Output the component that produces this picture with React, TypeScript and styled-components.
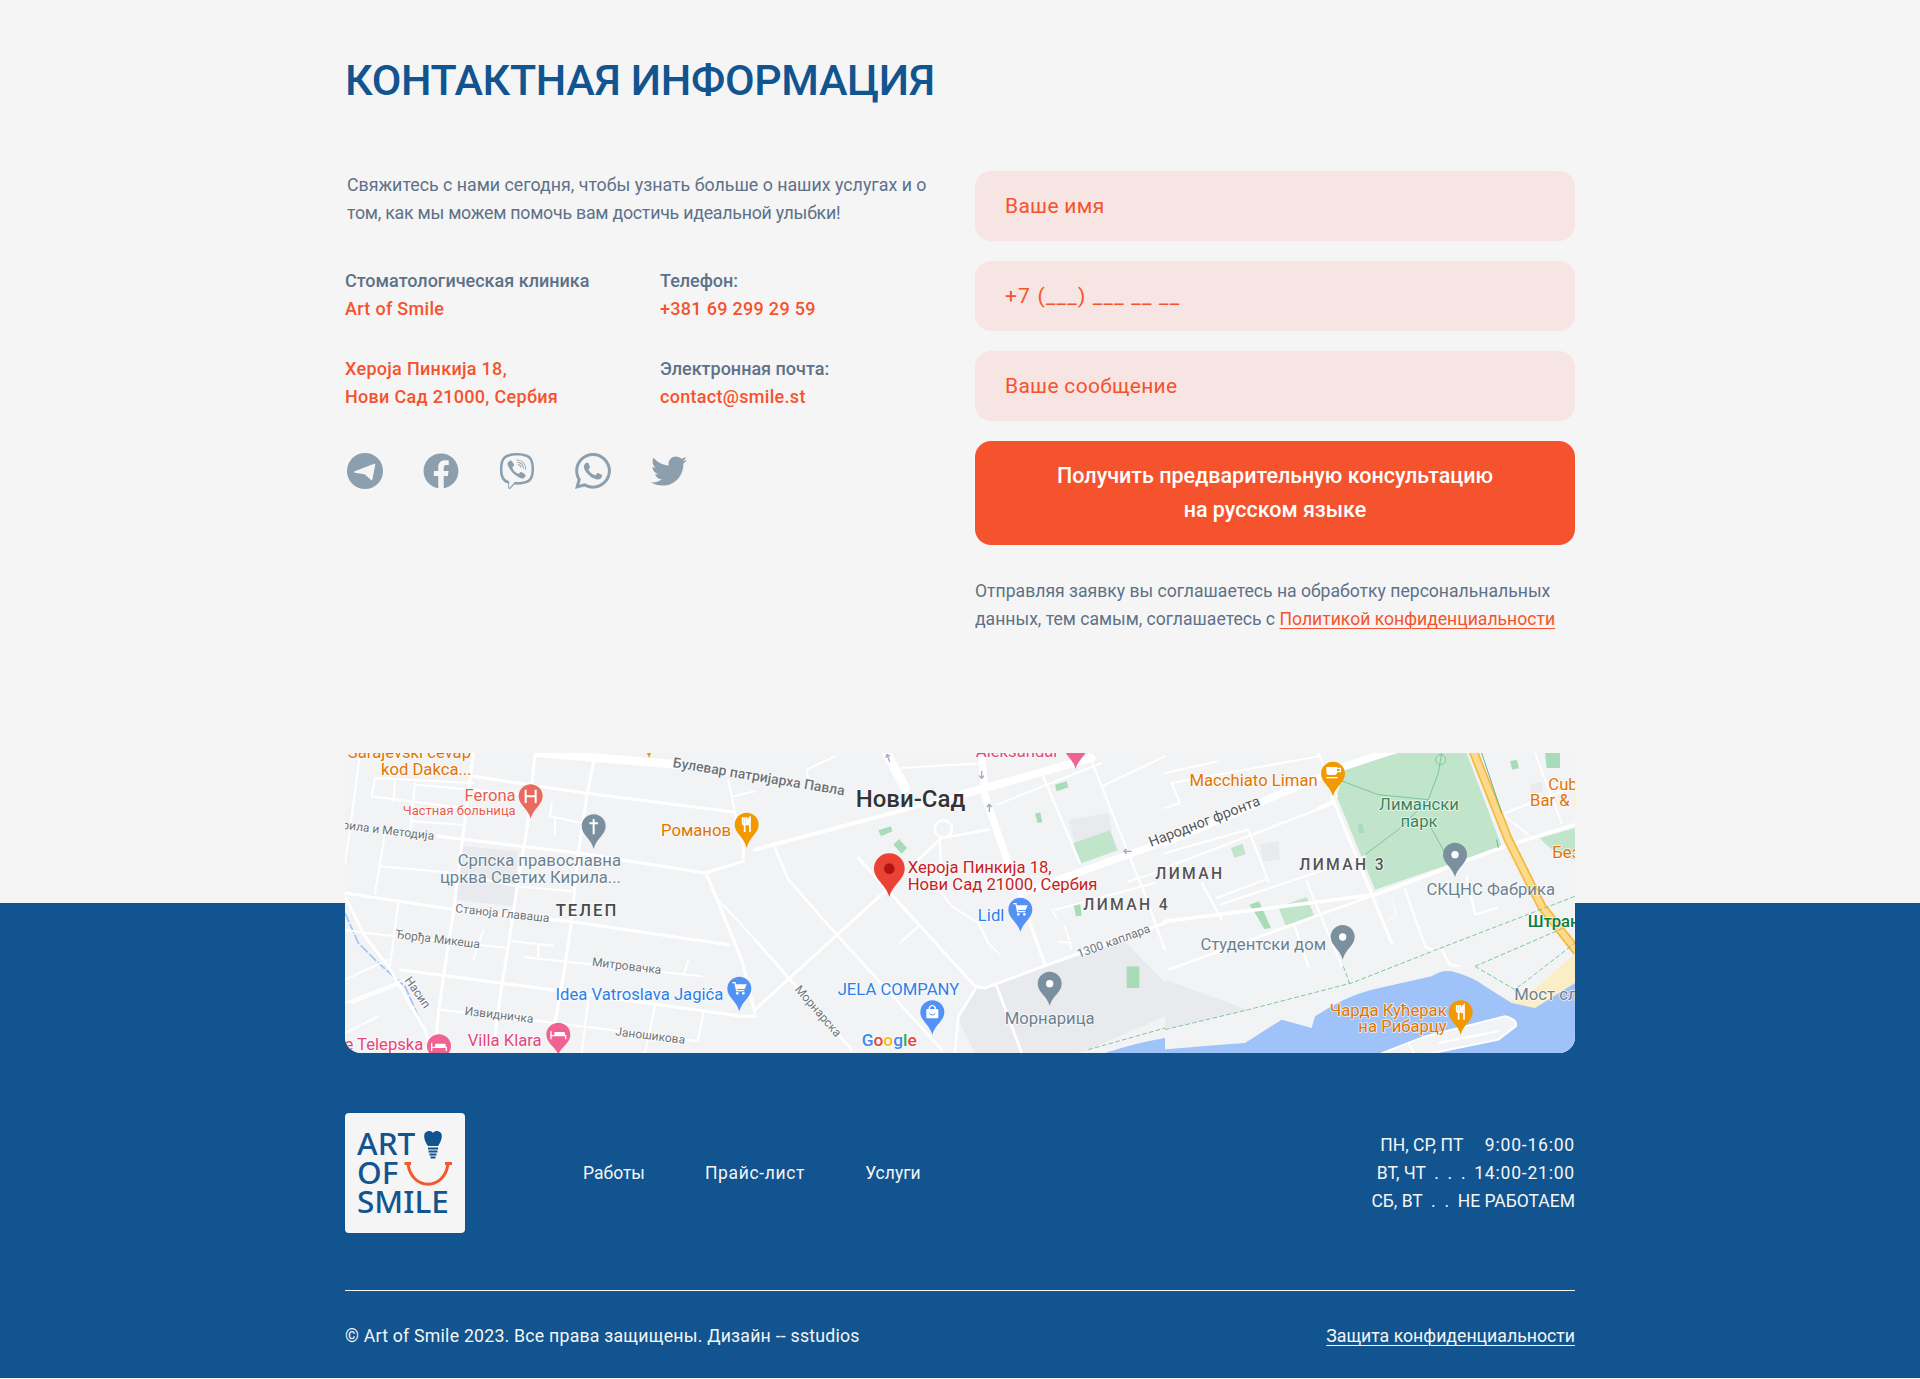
import React from "react"
import styled, { createGlobalStyle } from "styled-components"
import { FaFacebook, FaTwitter, FaViber, FaWhatsapp } from "react-icons/fa"

const BLUE = "#11548f"
const ORANGE = "#f5532d"
const FONT = `Roboto, "Noto Sans", sans-serif`

const GlobalStyle = createGlobalStyle`
  * { box-sizing: border-box; }
  html, body { margin: 0; padding: 0; background: #f5f5f5; }
  body { font-family: ${FONT}; font-variant-ligatures: none; }
`

const Page = styled.div`
  width: 100%;
  min-height: 1379px;
  background: #f5f5f5;
`

const Container = styled.div`
  width: 1230px;
  margin: 0 auto;
`

const Title = styled.h1`
  margin: 0;
  padding-top: 55px;
  font-size: 43px;
  line-height: 50px;
  font-weight: 500;
  color: ${BLUE};
  letter-spacing: -0.35px;
`

const Columns = styled.div`
  display: grid;
  grid-template-columns: 630px 600px;
  margin-top: 66px;
  padding-bottom: 120px;
`

const Lead = styled.p`
  margin: 0 0 40px 2px;
  width: 600px;
  font-size: 17.8px;
  line-height: 28px;
  color: #5d7188;
`

const LeadTail = styled.span`
  letter-spacing: -0.25px;
`

const ContactGrid = styled.div`
  display: grid;
  grid-template-columns: 315px 315px;
  row-gap: 32px;
`

const ContactBlock = styled.div`
  font-size: 18px;
  line-height: 28px;
  font-weight: 500;
  color: #5d7188;
`

const Accent = styled.div`
  color: ${ORANGE};
  letter-spacing: 0.3px;
`

const Socials = styled.div`
  display: flex;
  gap: 40px;
  margin: 42px 0 0 2px;
  color: #8c9fae;
  svg { display: block; width: 36px; height: 36px; }
`

const WhatsappIcon = styled(FaWhatsapp)`
  transform: scale(1.14);
`

const Form = styled.form`
  display: flex;
  flex-direction: column;
  gap: 20px;
`

const Field = styled.input<{ $tracking?: number }>`
  width: 100%;
  height: 70px;
  padding: 0 30px;
  border: 0;
  border-radius: 16px;
  background: #f7e5e3;
  font-family: ${FONT};
  font-size: 21px;
  letter-spacing: ${({ $tracking }) => $tracking ?? 0.3}px;
  color: ${ORANGE};
  outline: none;
  &::placeholder { color: ${ORANGE}; opacity: 1; }
`

const Submit = styled.button`
  height: 104px;
  border: 0;
  border-radius: 16px;
  background: ${ORANGE};
  color: #fff;
  font-family: ${FONT};
  font-size: 21.5px;
  line-height: 34px;
  font-weight: 500;
`

const Note = styled.p`
  margin: 12px 0 0;
  font-size: 17.6px;
  line-height: 28px;
  color: #5d7188;
`

const NoteLink = styled.a`
  color: ${ORANGE};
  text-decoration: underline;
  text-underline-offset: 3px;
  text-decoration-thickness: 1px;
`

const MapBand = styled.div`
  background: linear-gradient(#f5f5f5 150px, ${BLUE} 150px);
`

const MapFrame = styled.div`
  width: 1230px;
  height: 300px;
  margin: 0 auto;
  border-radius: 0 0 16px 16px;
  overflow: hidden;
  background: #f2f3f5;
  svg { display: block; }
`

const Footer = styled.footer`
  background: ${BLUE};
  color: #f5f5f5;
  padding: 60px 0 28px;
`

const FooterTop = styled.div`
  display: flex;
  align-items: center;
  padding-bottom: 57px;
  border-bottom: 1px solid #f5f5f5;
`

const Logo = styled.div`
  width: 120px;
  height: 120px;
  border-radius: 4px;
  background: #f5f5f5;
  svg { display: block; }
`

const Nav = styled.nav`
  display: flex;
  gap: 60px;
  margin-left: 118px;
  font-size: 17.5px;
`

const NavItem = styled.span<{ $tracking?: number }>`
  letter-spacing: ${({ $tracking }) => $tracking ?? 0}px;
`

const Hours = styled.div`
  margin-left: auto;
  font-size: 17.5px;
  line-height: 28px;
  text-align: right;
  white-space: pre;
`

const Time = styled.span`
  letter-spacing: 0.8px;
`

const FooterBottom = styled.div`
  display: flex;
  justify-content: space-between;
  margin-top: 31px;
  font-size: 17.7px;
  line-height: 28px;
`

const Copyright = styled.span`
  letter-spacing: 0.23px;
`

const FooterLink = styled.a`
  text-decoration: underline;
  text-underline-offset: 3px;
  text-decoration-thickness: 1px;
`

const TelegramIcon = () => (
  <svg viewBox="0 0 36 36">
    <circle cx="18" cy="18" r="18" fill="currentColor" />
    <path d="M8 19 L27.5 11.5 L24.5 26.5 L18 20.5 Z" fill="#f5f5f5" stroke="#f5f5f5" strokeWidth="1.6" strokeLinejoin="round" />
  </svg>
)

// map is drawn per 3x crop, coordinates taken straight from the zooms
type Road = [string, number?]

const ROADS_LEFT: Road[] = [
  ["M385,70 L720,120 L1170,178"],
  ["M570,0 L550,200 L515,410 L490,580 L470,700 L450,850"],
  ["M745,30 L725,130 L700,300 L680,500 L660,640 L630,810"],
  ["M385,0 L350,280 L325,480 L300,640 L280,780 L270,900"],
  ["M210,90 L195,240", 6],
  ["M120,240 L90,420", 6],
  ["M45,0 L15,230 L0,330", 6],
  ["M200,205 L350,215", 6],
  ["M90,75 L385,90 M90,75 L80,130 L350,165 M150,85 L145,145 M215,95 L540,125", 6],
  ["M280,250 L700,300 L1080,360 L1195,325 L1195,280 L1170,180"],
  ["M105,340 L325,360 L515,400 L680,415", 6],
  ["M0,420 L330,470 L670,505 L1150,575"],
  ["M0,530 L60,540 L400,575 L490,585", 6],
  ["M500,565 L625,578 M580,575 L580,610 M540,613 L1070,670", 6],
  ["M415,530 L385,620 M1030,620 L1015,670", 6],
  ["M165,650 L620,710 L1190,790 L1230,790"],
  ["M160,450 L135,640", 6],
  ["M285,770 L630,810 L910,845 L1060,865", 6],
  ["M1085,365 L1190,620 L1230,780"],
  ["M1120,440 L1230,560", 6],
  ["M0,430 L60,550 L130,640 L240,830 L260,890"],
  ["M0,680 L130,620 M0,750 L180,680 M20,750 L160,695 M0,840 L100,790", 6],
  ["M930,760 L900,900 M1075,780 L1060,860 M730,740 L710,900", 6],
  ["M620,150 L615,190 L710,210 M630,190 L630,245", 6],
  ["M1150,80 L1170,180 M1165,130 L1230,115", 6],
  ["M580,0 L1000,35", 26],
  ["M1000,35 L1230,70", 8],
]

const ROADS_MID: Road[] = [
  ["M1010,15 L620,125", 24],
  ["M620,125 L430,175 L0,290", 12],
  ["M395,0 L450,105", 28],
  ["M680,0 L690,130 L770,360", 22],
  ["M770,360 L870,635", 9],
  ["M1230,265 L800,420", 22],
  ["M310,315 L660,700 L690,705 L1000,590 L1230,510", 9],
  ["M60,285 L100,380 L245,545 L560,890", 8],
  ["M390,415 L0,770"],
  ["M490,520 L435,570", 6],
  ["M555,260 L560,420 L590,460 L670,510 L700,570 L735,605", 6],
  ["M490,320 L560,255 L700,230", 8],
  ["M0,560 L290,890", 8],
  ["M725,700 L800,900 M660,710 L610,790 L600,900", 8],
  ["M725,155 L1040,30", 6],
  ["M160,80 L155,50 L240,10", 6],
  ["M860,60 L975,330", 7],
  ["M1000,0 L1160,400 L1230,590", 7],
  ["M1040,100 L1230,10", 6],
  ["M440,45 L690,30", 6],
  ["M900,470 L1200,390", 6],
  ["M930,520 L950,590 M910,565 L950,570", 5],
  ["M890,470 L905,495 M1230,350 L1120,385", 5],
]

const ROADS_RIGHT: Road[] = [
  ["M0,270 L540,40 L690,-10", 22],
  ["M500,130 L680,570", 9],
  ["M0,505 L630,425 L1020,280 L1230,215", 11],
  ["M1020,190 L1090,245 M1020,180 L1110,145 L1230,100", 6],
  ["M460,0 L515,130", 7],
  ["M0,300 L250,230 L310,385", 7],
  ["M0,345 L510,150 M460,165 L500,145", 7],
  ["M155,435 L300,380 M165,455 L600,310", 6],
  ["M110,390 L170,500", 7],
  ["M425,385 L530,640", 6],
  ["M390,520 L430,640", 7],
  ["M10,650 L630,425", 8],
  ["M720,410 L770,550 L780,580 L810,595", 7],
  ["M830,590 L855,635 L880,640", 7],
  ["M905,370 L930,485 L995,465", 7],
  ["M680,430 L695,490 L665,505", 3],
  ["M0,60 L160,25 M20,90 L45,150 L0,165 M20,90 L460,10", 6],
  ["M1110,0 L1190,210", 6],
]

type Pin = { x: number; y: number; color: string; r?: number; tip?: number; glyph?: "dot" | "H" | "cross" | "fork" | "cart" | "bed" | "cup" | "bag" | "main" }

const pinPath = (x: number, y: number, r: number, tip: number) =>
  `M${x},${tip} C${x - r * 0.2},${y + r * 1.05} ${x - r},${y + r * 0.7} ${x - r},${y} a${r},${r} 0 0 1 ${r * 2},0 C${x + r},${y + r * 0.7} ${x + r * 0.2},${y + r * 1.05} ${x},${tip} Z`

const PinGlyph: React.FC<{ x: number; y: number; glyph?: Pin["glyph"] }> = ({ x, y, glyph }) => {
  const white = { stroke: "#fff", fill: "none", strokeWidth: 5 }
  switch (glyph) {
    case "dot":
      return <circle cx={x} cy={y} r={11} fill="#fff" />
    case "main":
      return <circle cx={x} cy={y} r={16} fill="#b31412" />
    case "H":
      return <path d={`M${x - 15},${y - 20} V${y + 20} M${x + 15},${y - 20} V${y + 20} M${x - 15},${y} H${x + 15}`} {...white} strokeWidth={6} />
    case "cross":
      return <path d={`M${x},${y - 22} V${y + 24} M${x - 13},${y - 9} H${x + 13}`} {...white} strokeWidth={6} />
    case "fork":
      return <path d={`M${x - 12},${y - 22} V${y - 6} Q${x - 12},${y} ${x - 6},${y} V${y + 22} M${x},${y - 22} V${y - 6} Q${x},${y} ${x - 6},${y} M${x - 6},${y - 22} V${y} M${x + 10},${y + 22} V${y - 22} Q${x + 4},${y - 16} ${x + 4},${y} H${x + 10}`} {...white} strokeWidth={5} />
    case "cart":
      return (
        <g>
          <path d={`M${x - 21},${y - 18} H${x - 13} L${x - 8},${y + 6} H${x + 15}`} {...white} strokeWidth={4} />
          <path d={`M${x - 12},${y - 13} H${x + 22} L${x + 16},${y + 1} H${x - 9} Z`} fill="#fff" />
          <circle cx={x - 6} cy={y + 14} r={4} fill="#fff" />
          <circle cx={x + 12} cy={y + 14} r={4} fill="#fff" />
        </g>
      )
    case "bed":
      return (
        <g>
          <path d={`M${x - 22},${y - 10} V${y + 14} M${x + 22},${y + 14} V${y + 3} H${x - 22}`} {...white} strokeWidth={4} />
          <rect x={x - 12} y={y - 8} width={32} height={10} rx={3} fill="#fff" />
        </g>
      )
    case "cup":
      return (
        <g>
          <path d={`M${x - 20},${y - 20} H${x + 12} V${y - 4} Q${x + 12},${y + 4} ${x + 4},${y + 4} H${x - 12} Q${x - 20},${y + 4} ${x - 20},${y - 4} Z`} fill="#fff" />
          <path d={`M${x + 12},${y - 16} H${x + 22} V${y - 6} H${x + 12}`} {...white} strokeWidth={4} />
          <path d={`M${x - 20},${y + 12} H${x + 14}`} {...white} strokeWidth={4} />
        </g>
      )
    case "bag":
      return (
        <g>
          <rect x={x - 18} y={y - 10} width={36} height={28} rx={3} fill="#fff" />
          <path d={`M${x - 9},${y - 10} V${y - 14} Q${x},${y - 28} ${x + 9},${y - 14} V${y - 10}`} {...white} strokeWidth={4} />
          <path d={`M${x - 9},${y + 3} Q${x},${y + 13} ${x + 9},${y + 3}`} stroke="#5491f5" fill="none" strokeWidth={3} />
        </g>
      )
    default:
      return null
  }
}

const MapPin: React.FC<Pin> = ({ x, y, color, r = 36, tip, glyph }) => (
  <g>
    <path d={pinPath(x, y, r, tip ?? y + r * 1.9)} fill={color} />
    <PinGlyph x={x} y={y} glyph={glyph} />
  </g>
)

const PINS_LEFT: Pin[] = [
  { x: 557, y: 130, color: "#ea6a5f", tip: 197, glyph: "H" },
  { x: 746, y: 220, color: "#7b909f", tip: 288, glyph: "cross" },
  { x: 1205, y: 215, color: "#f29900", tip: 285, glyph: "fork" },
  { x: 1183, y: 707, color: "#5491f5", tip: 775, glyph: "cart" },
  { x: 640, y: 845, color: "#f06292", tip: 905, glyph: "bed" },
  { x: 282, y: 880, color: "#f06292", tip: 950, glyph: "bed" },
  { x: 912, y: -50, color: "#f29900", tip: 15 },
]

const PINS_MID: Pin[] = [
  { x: 962, y: -20, color: "#f06292", tip: 48 },
  { x: 403, y: 347, r: 46, color: "#ea4335", tip: 432, glyph: "main" },
  { x: 796, y: 470, color: "#5491f5", tip: 537, glyph: "cart" },
  { x: 532, y: 778, color: "#5491f5", tip: 845, glyph: "bag" },
  { x: 884, y: 692, color: "#7b909f", tip: 758, glyph: "dot" },
]

const PINS_RIGHT: Pin[] = [
  { x: 504, y: 62, color: "#f29900", tip: 130, glyph: "cup" },
  { x: 870, y: 305, color: "#7b909f", tip: 372, glyph: "dot" },
  { x: 533, y: 552, color: "#7b909f", tip: 620, glyph: "dot" },
  { x: 887, y: 778, color: "#f29900", tip: 845, glyph: "fork" },
]

const MapText = styled.text<{ $size?: number; $weight?: number; $spacing?: number }>`
  font-family: Roboto, sans-serif;
  font-size: ${({ $size }) => $size ?? 50}px;
  font-weight: ${({ $weight }) => $weight ?? 400};
  letter-spacing: ${({ $spacing }) => $spacing ?? 0}px;
  paint-order: stroke;
  stroke: rgba(255, 255, 255, 0.75);
  stroke-width: 5px;
  stroke-linejoin: round;
`

type Label = { t: string; x: number; y: number; c: string; end?: boolean; mid?: boolean; rot?: number; size?: number; weight?: number; spacing?: number }

const ORG = "#e37400"
const GRAY = "#6c8190"
const STREET = "#6f7378"
const PINK = "#e8447a"
const MAPBLUE = "#2f7fe6"

const LABELS_LEFT: Label[] = [
  { t: "Sarajevski ćevap", x: 378, y: 15, c: ORG, end: true },
  { t: "kod Dakca...", x: 380, y: 65, c: ORG, end: true },
  { t: "Ferona", x: 512, y: 145, c: "#ea5b4f", end: true },
  { t: "Частная больница", x: 512, y: 185, c: "#ea5b4f", end: true, size: 39 },
  { t: "Кирила и Методија", x: -52, y: 222, c: STREET, rot: 7, size: 36 },
  { t: "Српска православна", x: 828, y: 340, c: GRAY, end: true },
  { t: "црква Светих Кирила...", x: 828, y: 390, c: GRAY, end: true },
  { t: "ТЕЛЕП", x: 632, y: 488, c: "#4a4a4a", size: 50, weight: 500, spacing: 6 },
  { t: "Станоја Главаша", x: 330, y: 478, c: STREET, rot: 6, size: 36 },
  { t: "Ђорђа Микеша", x: 150, y: 555, c: STREET, rot: 7, size: 36 },
  { t: "Митровачка", x: 740, y: 638, c: STREET, rot: 7, size: 36 },
  { t: "Насип", x: 178, y: 682, c: STREET, rot: 55, size: 36 },
  { t: "Извидничка", x: 358, y: 785, c: STREET, rot: 7, size: 36 },
  { t: "Јаношикова", x: 810, y: 847, c: STREET, rot: 7, size: 36 },
  { t: "Idea Vatroslava Jagića", x: 1135, y: 742, c: MAPBLUE, end: true },
  { t: "Villa Klara", x: 590, y: 878, c: PINK, end: true },
  { t: "e Telepska", x: 235, y: 890, c: PINK, end: true },
  { t: "Романов", x: 1158, y: 250, c: ORG, end: true },
  { t: "Булевар патријарха Павла", x: 982, y: 42, c: STREET, rot: 9.4, size: 42, weight: 500 },
]

const LABELS_MID: Label[] = [
  { t: "Нови-Сад", x: 302, y: 162, c: "#333", size: 72, weight: 500 },
  { t: "Aleksandar", x: 912, y: 12, c: PINK, end: true },
  { t: "Хероја Пинкија 18,", x: 458, y: 360, c: "#c5221f" },
  { t: "Нови Сад 21000, Сербия", x: 458, y: 410, c: "#c5221f" },
  { t: "Lidl", x: 748, y: 503, c: MAPBLUE, end: true },
  { t: "ЛИМАН 4", x: 985, y: 470, c: "#555", size: 47, weight: 500, spacing: 7 },
  { t: "JELA COMPANY", x: 248, y: 727, c: MAPBLUE },
  { t: "Морнарица", x: 884, y: 812, c: GRAY, mid: true },
  { t: "Морнарска", x: 118, y: 710, c: STREET, rot: 49, size: 36 },
  { t: "1300 каплара", x: 972, y: 615, c: STREET, rot: -20, size: 36 },
  { t: "Народног фронта", x: 1188, y: 282, c: "#555", rot: -21, size: 43 },
]

const LABELS_RIGHT: Label[] = [
  { t: "ЛИМАН", x: 178, y: 378, c: "#555", size: 47, weight: 500, spacing: 7, end: true },
  { t: "Macchiato Liman", x: 458, y: 98, c: ORG, end: true },
  { t: "Лимански", x: 762, y: 172, c: "#34855a", mid: true },
  { t: "парк", x: 762, y: 222, c: "#34855a", mid: true },
  { t: "ЛИМАН 3", x: 403, y: 350, c: "#555", size: 47, weight: 500, spacing: 7 },
  { t: "СКЦНС Фабрика", x: 1170, y: 425, c: GRAY, end: true },
  { t: "Студентски дом", x: 483, y: 590, c: GRAY, end: true },
  { t: "Чарда Кућерак", x: 845, y: 788, c: ORG, end: true },
  { t: "на Рибарцу", x: 845, y: 838, c: ORG, end: true },
  { t: "Штранд", x: 1088, y: 522, c: "#0d7d3f", weight: 500 },
  { t: "Мост слободе", x: 1048, y: 740, c: GRAY },
  { t: "Cuba", x: 1150, y: 112, c: ORG },
  { t: "Bar & Bistro", x: 1095, y: 160, c: ORG },
  { t: "Без", x: 1162, y: 315, c: ORG },
]

const Roads: React.FC<{ roads: Road[] }> = ({ roads }) => (
  <g fill="none" stroke="#fff" strokeLinecap="round" strokeLinejoin="round">
    {roads.map(([d, w], i) => (
      <path key={i} d={d} strokeWidth={w ?? 9} />
    ))}
  </g>
)

const Labels: React.FC<{ labels: Label[] }> = ({ labels }) => (
  <>
    {labels.map(l => (
      <MapText
        key={l.t}
        x={l.x}
        y={l.y}
        fill={l.c}
        $size={l.size}
        $weight={l.weight}
        $spacing={l.spacing}
        textAnchor={l.end ? "end" : l.mid ? "middle" : "start"}
        transform={l.rot ? `rotate(${l.rot} ${l.x} ${l.y})` : undefined}
      >
        {l.t}
      </MapText>
    ))}
  </>
)

const Crop: React.FC<{ n: number; children: React.ReactNode }> = ({ n, children }) => (
  <g transform={`translate(${n * 410} 0) scale(${1 / 3})`}>{children}</g>
)

const OneWay: React.FC<{ x: number; y: number; rot: number }> = ({ x, y, rot }) => (
  <path d="M-12,0 H12 M-12,0 L-3,-7 M-12,0 L-3,7" transform={`translate(${x} ${y}) rotate(${rot})`} fill="none" stroke="#a3a8c4" strokeWidth={4} />
)

const LIGHT_GREEN = "#a8dcb8"
const PARK = "#c1e5ca"

const MapDrawing = () => (
  <svg width="1230" height="300" viewBox="0 0 1230 300">
    <rect width="1230" height="300" fill="#f2f3f5" />
    <Crop n={0}>
      <path d="M355,280 L520,295 L505,460 L335,440 Z" fill="#e8eaed" />
      <path d="M0,480 L40,570 L100,630 L180,700 L220,790 L250,850" fill="none" stroke="#9fc3f5" strokeWidth={5} strokeDasharray="30 6" />
      <Roads roads={ROADS_LEFT} />
    </Crop>
    <Crop n={1}>
      <path d="M610,800 L665,710 L1110,565 L1230,690 L1230,790 L1000,890 L960,900 L660,900 Z" fill="#e8eaed" />
      <path d="M940,200 L1060,180 L1070,235 L960,270 Z" fill="#e8eaed" />
      <path d="M955,270 L1065,232 L1088,292 L975,332 Z" fill={PARK} />
      <g fill={LIGHT_GREEN}>
        <path d="M370,232 L408,220 L412,235 L378,250 Z" />
        <path d="M415,275 L432,258 L456,285 L440,302 Z" />
        <path d="M840,182 L856,178 L862,208 L848,210 Z" />
        <path d="M900,95 L935,85 L940,103 L905,115 Z" />
        <path d="M1115,640 H1153 V705 H1115 Z" />
        <path d="M955,452 L975,448 L980,488 L963,490 Z" />
      </g>
      <Roads roads={ROADS_MID} />
      <circle cx={565} cy={228} r={26} fill="none" stroke="#fff" strokeWidth={8} />
      <OneWay x={400} y={15} rot={70} />
      <OneWay x={680} y={65} rot={-90} />
      <OneWay x={703} y={165} rot={90} />
      <OneWay x={1118} y={295} rot={0} />
      <path d="M1000,890 L1230,825" fill="none" stroke="#7fc79a" strokeWidth={3} strokeDasharray="14 7" />
      <path d="M1050,900 Q1140,870 1230,855 V900 Z" fill="#9fc3f8" />
    </Crop>
    <Crop n={2}>
      <path d="M540,45 L700,0 L905,0 L1010,280 L630,410 L515,130 Z" fill={PARK} />
      <path d="M1125,255 L1230,225 V320 Q1160,300 1125,255 Z" fill={PARK} />
      <g fill={LIGHT_GREEN}>
        <path d="M198,285 L232,272 L242,303 L208,315 Z" fill="#c1e5ca" />
        <path d="M253,455 L282,445 L318,525 L298,528 L270,480 Z" />
        <path d="M340,462 L425,432 L448,490 L362,518 Z" fill="#c1e5ca" />
        <path d="M1035,25 L1055,20 L1062,45 L1042,50 Z" />
        <path d="M1140,0 H1185 V45 H1145 Z" />
        <path d="M578,215 L592,212 L598,240 L583,240 Z" />
      </g>
      <path d="M285,275 L340,265 L345,320 L295,325 Z" fill="#e8eaed" />
      <path d="M1095,95 L1130,85 L1135,115 L1100,122 Z" fill="#e8eaed" />
      <path d="M0,680 L250,770 L0,830 Z" fill="#e8eaed" />
      <path d="M520,80 L640,125 L790,140 L820,60 L830,0 M600,305 L700,230 L790,140 M790,210 L840,300" fill="none" stroke="#7fc79a" strokeWidth={3} />
      <circle cx={827} cy={20} r={15} fill="none" stroke="#7fc79a" strokeWidth={3} />
      <Roads roads={ROADS_RIGHT} />
      <path d="M925,-5 L1030,260 L1130,460 L1240,600" fill="none" stroke="#f6b73c" strokeWidth={28} />
      <path d="M925,-5 L1030,260 L1130,460 L1240,600" fill="none" stroke="#fdd98b" strokeWidth={18} />
      <path d="M950,0 L1010,180 M995,260 L1000,285" fill="none" stroke="#5fb98a" strokeWidth={3} />
      <path d="M0,830 L250,770 L560,690 L840,580 L1230,430 M535,640 L555,695" fill="none" stroke="#7fc79a" strokeWidth={3} strokeDasharray="14 7" />
      <path d="M930,640 L1050,710 L1230,570 M930,640 L1230,510" fill="none" stroke="#7fc79a" strokeWidth={3} strokeDasharray="14 7" />
      <path d="M1030,745 L1120,700 L1230,600 V690 L1110,765 Z" fill="#fbeec4" />
      <path d="M-180,905 Q100,880 240,870 L350,800 L440,825 L450,790 Q540,730 620,710 L800,670 Q830,650 860,655 Q920,670 960,700 L1040,750 L1110,765 L1230,690 V905 Z" fill="#9fc3f8" />
      <path d="M640,905 L780,850 L1020,790 Q1060,800 1052,820 L1000,860 L780,905 Z" fill="#f2f3f5" stroke="#fff" strokeWidth={6} />
      <path d="M730,870 L750,905 M820,870 L1000,835" fill="none" stroke="#fff" strokeWidth={6} />
    </Crop>
    <Crop n={0}>{PINS_LEFT.map((p, i) => <MapPin key={i} {...p} />)}<Labels labels={LABELS_LEFT} /></Crop>
    <Crop n={1}>
      {PINS_MID.map((p, i) => <MapPin key={i} {...p} />)}
      <Labels labels={LABELS_MID} />
      <MapText x={320} y={880} $size={52} $weight={500}>
        <tspan fill="#4285f4">G</tspan>
        <tspan fill="#ea4335">o</tspan>
        <tspan fill="#fbbc05">o</tspan>
        <tspan fill="#4285f4">g</tspan>
        <tspan fill="#34a853">l</tspan>
        <tspan fill="#ea4335">e</tspan>
      </MapText>
    </Crop>
    <Crop n={2}>{PINS_RIGHT.map((p, i) => <MapPin key={i} {...p} />)}<Labels labels={LABELS_RIGHT} /></Crop>
  </svg>
)

const LogoText = styled.text`
  font-family: "Noto Sans", sans-serif;
  font-size: 31.5px;
  font-weight: 500;
  fill: ${BLUE};
`

const LogoMark = () => (
  <svg width="120" height="120" viewBox="0 0 120 120">
    <LogoText x="12" y="42">ART</LogoText>
    <LogoText x="12" y="71">OF</LogoText>
    <LogoText x="12" y="100">SMILE</LogoText>
    <path d="M80,20 C83,17 87,18 88,20 C89,18 93,17 96,20 C98,23 96,29 93,33 H83 C80,29 78,23 80,20 Z" fill={BLUE} />
    <path d="M83,35.5 H93 M83.5,38.5 H92.5 M84.5,41.5 H91.5 M85.5,44.5 H90.5" stroke={BLUE} strokeWidth="2" />
    <path d="M59.5,50.5 H66 M63,50.5 C66,78 100,78 103,50.5 M100,50.5 H107" fill="none" stroke="#f4592b" strokeWidth="3" />
  </svg>
)

export default function App() {
  return (
    <Page>
      <GlobalStyle />
      <Container>
        <Title>КОНТАКТНАЯ ИНФОРМАЦИЯ</Title>
        <Columns>
          <div>
            <Lead>
              Свяжитесь с нами сегодня, чтобы узнать больше о наших услугах и о<br />
              <LeadTail>том, как мы можем помочь вам достичь идеальной улыбки!</LeadTail>
            </Lead>
            <ContactGrid>
              <ContactBlock>
                Стоматологическая клиника
                <Accent>Art of Smile</Accent>
              </ContactBlock>
              <ContactBlock>
                Телефон:
                <Accent>+381 69 299 29 59</Accent>
              </ContactBlock>
              <ContactBlock>
                <Accent>Хероја Пинкија 18,</Accent>
                <Accent>Нови Сад 21000, Сербия</Accent>
              </ContactBlock>
              <ContactBlock>
                Электронная почта:
                <Accent>contact@smile.st</Accent>
              </ContactBlock>
            </ContactGrid>
            <Socials>
              <TelegramIcon />
              <FaFacebook />
              <FaViber />
              <WhatsappIcon />
              <FaTwitter />
            </Socials>
          </div>
          <div>
            <Form onSubmit={e => e.preventDefault()}>
              <Field placeholder="Ваше имя" />
              <Field placeholder="+7 (___) ___ __ __" $tracking={1.2} />
              <Field placeholder="Ваше сообщение" />
              <Submit>
                Получить предварительную консультацию<br />
                на русском языке
              </Submit>
              <Note>
                Отправляя заявку вы соглашаетесь на обработку персональнальных<br />
                данных, тем самым, соглашаетесь с <NoteLink>Политикой конфиденциальности</NoteLink>
              </Note>
            </Form>
          </div>
        </Columns>
      </Container>
      <MapBand>
        <MapFrame>
          <MapDrawing />
        </MapFrame>
      </MapBand>
      <Footer>
        <Container>
          <FooterTop>
            <Logo><LogoMark /></Logo>
            <Nav>
              <NavItem>Работы</NavItem>
              <NavItem $tracking={0.65}>Прайс-лист</NavItem>
              <NavItem>Услуги</NavItem>
            </Nav>
            <Hours>
              {"ПН, СР, ПТ     "}<Time>9:00-16:00</Time>{"\n"}
              {"ВТ, ЧТ  .  .  .  "}<Time>14:00-21:00</Time>{"\n"}
              {"СБ, ВТ  .  .  НЕ РАБОТАЕМ"}
            </Hours>
          </FooterTop>
          <FooterBottom>
            <Copyright>© Art of Smile 2023. Все права защищены. Дизайн -- sstudios</Copyright>
            <FooterLink>Защита конфиденциальности</FooterLink>
          </FooterBottom>
        </Container>
      </Footer>
    </Page>
  )
}
